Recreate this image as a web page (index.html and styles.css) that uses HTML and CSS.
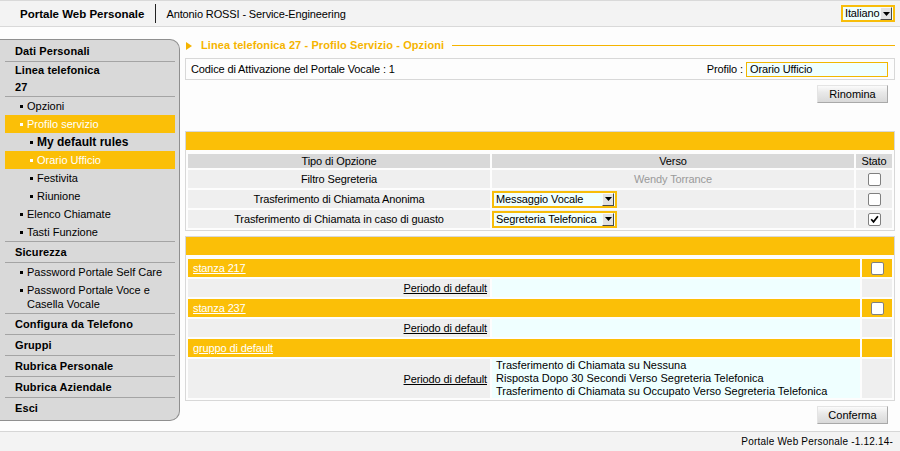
FILE: index.html
```html
<!DOCTYPE html>
<html lang="it">
<head>
<meta charset="utf-8">
<title>Portale Web Personale</title>
<link rel="stylesheet" href="styles.css">
</head>
<body>
<header class="topbar">
  <span class="brand">Portale Web Personale</span>
  <span class="divider"></span>
  <span class="user">Antonio ROSSI - Service-Engineering</span>
  <div class="sel lang">
    <span class="sel-text">Italiano</span>
    <span class="sel-btn"><svg width="7" height="4" viewBox="0 0 7 4"><path d="M0 0h7L3.5 4z" fill="#000"/></svg></span>
  </div>
</header>

<div class="layout">
  <nav class="sidebar">
    <div class="head">Dati Personali</div>
    <div class="head tall">Linea telefonica<br>27</div>
    <ul class="sub">
      <li>Opzioni</li>
      <li class="active">Profilo servizio</li>
      <li class="l2 strong">My default rules</li>
      <li class="l2 active">Orario Ufficio</li>
      <li class="l2">Festivita</li>
      <li class="l2">Riunione</li>
      <li>Elenco Chiamate</li>
      <li>Tasti Funzione</li>
    </ul>
    <div class="head">Sicurezza</div>
    <ul class="sub">
      <li>Password Portale Self Care</li>
      <li>Password Portale Voce e Casella Vocale</li>
    </ul>
    <div class="head">Configura da Telefono</div>
    <div class="head">Gruppi</div>
    <div class="head">Rubrica Personale</div>
    <div class="head">Rubrica Aziendale</div>
    <div class="head">Esci</div>
  </nav>

  <main class="main">
    <h1 class="title"><span class="tri"></span><span>Linea telefonica 27 - Profilo Servizio - Opzioni</span><span class="rule"></span></h1>

    <div class="infobox">
      <span>Codice di Attivazione del Portale Vocale : 1</span>
      <span class="profilo">Profilo : <span class="input">Orario Ufficio</span></span>
    </div>
    <div class="actions"><button class="btn" type="button">Rinomina</button></div>

    <section class="panel first">
      <div class="panel-head"></div>
      <table class="grid">
        <colgroup><col class="c1"><col class="c2a"><col class="c3a"></colgroup>
        <tr class="th"><td>Tipo di Opzione</td><td>Verso</td><td>Stato</td></tr>
        <tr class="row"><td class="center">Filtro Segreteria</td><td class="center muted">Wendy Torrance</td><td class="center"><span class="cb"></span></td></tr>
        <tr class="row"><td class="center">Trasferimento di Chiamata Anonima</td><td><div class="sel cellsel"><span class="sel-text">Messaggio Vocale</span><span class="sel-btn"><svg width="7" height="4" viewBox="0 0 7 4"><path d="M0 0h7L3.5 4z" fill="#000"/></svg></span></div></td><td class="center"><span class="cb"></span></td></tr>
        <tr class="row"><td class="center">Trasferimento di Chiamata in caso di guasto</td><td><div class="sel cellsel"><span class="sel-text">Segreteria Telefonica</span><span class="sel-btn"><svg width="7" height="4" viewBox="0 0 7 4"><path d="M0 0h7L3.5 4z" fill="#000"/></svg></span></div></td><td class="center"><span class="cb"><svg width="11" height="11" viewBox="0 0 11 11"><path d="M2.2 5.2l2.3 2.6 4.4-5.6" fill="none" stroke="#000" stroke-width="1.7"/></svg></span></td></tr>
      </table>
    </section>

    <section class="panel second">
      <div class="panel-head"></div>
      <table class="grid">
        <colgroup><col class="c1"><col class="c2b"><col class="c3b"></colgroup>
        <tr class="grp"><td colspan="2"><a href="#">stanza 217</a></td><td class="center"><span class="cb"></span></td></tr>
        <tr class="row"><td class="right"><a href="#" class="dark">Periodo di default</a></td><td class="azure"></td><td></td></tr>
        <tr class="grp"><td colspan="2"><a href="#">stanza 237</a></td><td class="center"><span class="cb"></span></td></tr>
        <tr class="row"><td class="right"><a href="#" class="dark">Periodo di default</a></td><td class="azure"></td><td></td></tr>
        <tr class="grp"><td colspan="2"><a href="#">gruppo di default</a></td><td></td></tr>
        <tr class="row multi"><td class="right"><a href="#" class="dark">Periodo di default</a></td><td class="azure lines">Trasferimento di Chiamata su Nessuna<br>Risposta Dopo 30 Secondi Verso Segreteria Telefonica<br>Trasferimento di Chiamata su Occupato Verso Segreteria Telefonica</td><td></td></tr>
      </table>
    </section>
    <div class="actions"><button class="btn" type="button">Conferma</button></div>
  </main>
</div>

<footer class="footer">Portale Web Personale -1.12.14-</footer>
</body>
</html>
```

FILE: styles.css
```css
* { box-sizing: border-box; margin: 0; padding: 0; }
html, body { height: 100%; overflow: hidden; }
body {
  font-family: "Liberation Sans", Arial, sans-serif;
  font-size: 11px;
  color: #000;
  background: #fdfdfd;
  letter-spacing: -0.12px;
}

/* top bar */
.topbar {
  height: 27px;
  border-top: 1px solid #d9d9d9;
  border-bottom: 1px solid #d9d9d9;
  background: #f3f3f3;
  display: flex;
  align-items: center;
  padding: 0 5px 0 20px;
}
.brand { font-weight: bold; font-size: 11.5px; letter-spacing: 0; }
.divider { width: 1px; height: 19px; background: #222; margin: 0 10px 0 11px; }
.lang { margin-left: auto; width: 54px; background: #fff; }

/* fake select */
.sel {
  display: flex;
  align-items: center;
  height: 17px;
  border: 2px solid #f8bd0a;
  background: #efffff;
  padding-right: 1px;
}
.sel-text { flex: 1; padding-left: 2px; line-height: 13px; white-space: nowrap; overflow: hidden; }
.sel-btn {
  flex: none;
  width: 12px;
  height: 13px;
  background: #e2e2e2;
  border: 1px solid;
  border-color: #fafafa #4a4a4a #4a4a4a #fafafa;
  display: flex;
  align-items: center;
  justify-content: center;
}
.cellsel { width: 125px; }

/* layout */
.layout { display: flex; align-items: flex-start; padding: 12px 0 7px; }

/* sidebar */
.sidebar {
  flex: none;
  width: 180px;
  background: #d9d9d9;
  border: 1px solid #8f8f8f;
  border-left: none;
  border-radius: 0 10px 10px 0;
  padding: 1px 4px 2px 5px;
  letter-spacing: 0;
}
.head {
  font-weight: bold;
  line-height: 17px;
  padding: 2px 0 1px 10px;
  border-bottom: 1px solid #a4a4a4;
  letter-spacing: 0.1px;
}
.head.tall { padding: 0 0 0 10px; }
.sub { list-style: none; border-bottom: 1px solid #a4a4a4; }
.sub li { padding: 2px 0 2px 22px; line-height: 14px; }
.sub li::before {
  content: "";
  display: inline-block;
  width: 3px;
  height: 3px;
  background: #000;
  margin-left: -7px;
  margin-right: 4px;
  vertical-align: 2px;
}
.sub li.l2 { padding-left: 32px; }
.sub li.strong { font-weight: bold; font-size: 12px; }
.sub li.active { background: #fbbf07; color: #fff; }
.sub li.active::before { background: #fff; }
.sidebar > :last-child { border-bottom: none; }

/* main */
.main { flex: 1; min-width: 0; margin: 0 5px; }
.title {
  display: flex;
  align-items: center;
  font-size: 11px;
  font-weight: bold;
  line-height: 13px;
  color: #f5b400;
  letter-spacing: 0.1px;
}
.tri {
  width: 0;
  height: 0;
  border-left: 6px solid #f5b400;
  border-top: 4px solid transparent;
  border-bottom: 4px solid transparent;
  margin: 0 9px 0 1px;
}
.rule { flex: 1; height: 1px; background: #f5b400; margin-left: 8px; }

.infobox {
  margin-top: 6px;
  height: 22px;
  border: 1px solid #d8d8d8;
  display: flex;
  align-items: center;
  justify-content: space-between;
  padding: 0 6px 0 5px;
}
.profilo { display: flex; align-items: center; }
.input {
  width: 142px;
  height: 15px;
  margin-left: 3px;
  border: 1px solid #f2b700;
  background: #efffff;
  line-height: 13px;
  padding-left: 3px;
}

.actions { display: flex; justify-content: flex-end; padding-right: 7px; margin-top: 5px; }
.btn {
  width: 71px;
  height: 18px;
  font: inherit;
  color: #000;
  border: 1px solid;
  border-color: #e4e4e4 #a9a9a9 #a9a9a9 #e4e4e4;
  background: linear-gradient(#fbfbfb, #e9e9e9 40%, #d9d9d9);
}

/* panels */
.panel { border: 1px solid #d8d8d8; }
.panel.first { margin-top: 28px; }
.panel.second { margin-top: 5px; }
.panel-head { height: 18px; background: #fbbf07; }
.grid {
  width: 100%;
  table-layout: fixed;
  border-collapse: separate;
  border-spacing: 2px;
  margin-top: 2px;
}
.c1 { width: 302px; }
.c2a { width: 362px; }
.c3a { width: 36px; }
.c2b { width: 368px; }
.c3b { width: 30px; }
.grid td { padding: 0; height: 18px; vertical-align: middle; white-space: nowrap; }
.grid tr.th td { height: 14px; line-height: 14px; background: #d9d9d9; text-align: center; }
.grid tr.row td { background: #efefef; }
.grid tr.row td.azure { background: #efffff; }
.grid tr.grp td { background: #fbbf07; }
.grid tr.grp td:first-child { padding-left: 5px; }
.grid tr.multi td { height: 39px; }
.center { text-align: center; }
.right { text-align: right; padding-right: 3px !important; }
.muted { color: #9a9a9a; }
.lines { line-height: 13px; padding-left: 4px !important; letter-spacing: 0; }

a { color: #fff; text-decoration: underline; }
a.dark { color: #000; }

.cb {
  display: inline-block;
  width: 13px;
  height: 13px;
  border: 1px solid #808080;
  border-radius: 2px;
  background: #fff;
  vertical-align: middle;
}
.cb svg { display: block; }

/* footer */
.footer {
  height: 20px;
  border-top: 1px solid #d6d6d6;
  background: #f3f3f3;
  line-height: 19px;
  text-align: right;
  padding-right: 7px;
  font-size: 10px;
  letter-spacing: 0.2px;
}
```
